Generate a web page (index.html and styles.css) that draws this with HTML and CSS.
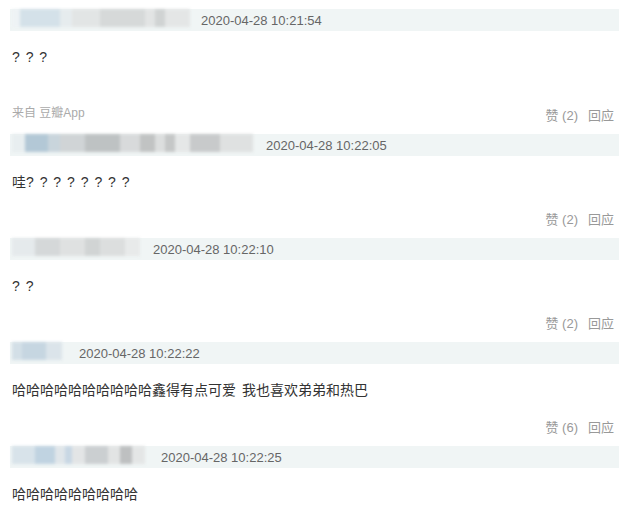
FILE: index.html
```html
<!DOCTYPE html>
<html lang="zh-CN">
<head>
    <meta charset="UTF-8">
    <meta name="viewport" content="width=device-width, initial-scale=1.0">
    <title>回应</title>
    <link rel="stylesheet" href="styles.css">
</head>
<body>
    <div class="comments">
        <div class="comment">
            <div class="comment-head">
                <span class="author author-1"></span>
                <span class="pubtime">2020-04-28 10:21:54</span>
            </div>
            <div class="comment-body">? ? ?</div>
            <div class="comment-foot from-app">
                <span class="source">来自 豆瓣App</span>
                <span class="actions"><a>赞 (2)</a><a>回应</a></span>
            </div>
        </div>

        <div class="comment">
            <div class="comment-head">
                <span class="author author-2"></span>
                <span class="pubtime">2020-04-28 10:22:05</span>
            </div>
            <div class="comment-body">哇? ? ? ? ? ? ? ?</div>
            <div class="comment-foot">
                <span class="actions"><a>赞 (2)</a><a>回应</a></span>
            </div>
        </div>

        <div class="comment">
            <div class="comment-head">
                <span class="author author-3"></span>
                <span class="pubtime">2020-04-28 10:22:10</span>
            </div>
            <div class="comment-body">? ?</div>
            <div class="comment-foot">
                <span class="actions"><a>赞 (2)</a><a>回应</a></span>
            </div>
        </div>

        <div class="comment">
            <div class="comment-head">
                <span class="author author-4"></span>
                <span class="pubtime">2020-04-28 10:22:22</span>
            </div>
            <div class="comment-body">哈哈哈哈哈哈哈哈哈哈鑫得有点可爱 我也喜欢弟弟和热巴</div>
            <div class="comment-foot">
                <span class="actions"><a>赞 (6)</a><a>回应</a></span>
            </div>
        </div>

        <div class="comment">
            <div class="comment-head">
                <span class="author author-5"></span>
                <span class="pubtime">2020-04-28 10:22:25</span>
            </div>
            <div class="comment-body">哈哈哈哈哈哈哈哈哈</div>
        </div>
    </div>
</body>
</html>
```

FILE: styles.css
```css
body {
    margin: 0;
    font-family: "Liberation Sans", Arial, "Noto Sans CJK SC", sans-serif;
    font-size: 13px;
    color: #333;
    background: #fff;
    overflow: hidden;
}

.comments {
    padding: 9px 0 0 10px;
}

.comment-head {
    display: flex;
    align-items: center;
    height: 22px;
    padding-left: 2px;
    background: #f0f5f5;
}

/* hidden user names, drawn as a soft mosaic */
.author {
    height: 18px;
    margin-top: -4px;
    filter: blur(1.4px);
}

.author-1 {
    width: 178px;
    margin-right: 11px;
    background: linear-gradient(90deg, #eef3f5 0 8px, #d4e1e9 8px 48px, #e6ecee 48px 60px,
        #e2e5e5 60px 88px, #d6d9d9 88px 133px, #e2e4e4 133px 143px, #d0d3d3 143px 153px, #e4e6e6 153px);
}

.author-2 {
    width: 241px;
    margin-right: 13px;
    background: linear-gradient(90deg, #e8eef0 0 13px, #b3c8d6 13px 36px, #c9d5dc 36px 48px,
        #d0d4d6 48px 73px, #bec2c3 73px 108px, #d8dadb 108px 128px, #c1c3c3 128px 143px,
        #dcdede 143px 153px, #c5c7c7 153px 163px, #e5e7e7 163px 178px, #c8cacb 178px 208px, #dfe1e1 208px);
}

.author-3 {
    width: 128px;
    margin-right: 13px;
    background: linear-gradient(90deg, #e5eaec 0 23px, #d5d8d9 23px 48px, #dfe1e1 48px 73px,
        #d1d4d4 73px 88px, #dcdede 88px 113px, #e8eaea 113px);
}

.author-4 {
    width: 50px;
    margin-right: 17px;
    background: linear-gradient(90deg, #d3dfe7 0 10px, #c6d6e1 10px 34px, #dbe4ea 34px);
}

.author-5 {
    width: 133px;
    margin-right: 16px;
    background: linear-gradient(90deg, #d8e3ea 0 23px, #c0d3e1 23px 43px, #e0e6ea 43px 53px,
        #c8d7e4 53px 60px, #e3e5e6 60px 73px, #cbcfd1 73px 96px, #e2e4e4 96px 108px,
        #bec0c1 108px 120px, #e4e6e6 120px);
}

.pubtime {
    color: #666;
    font-size: 13px;
}

.comment-body {
    margin-top: 17px;
    padding-left: 2px;
    font-size: 14px;
    line-height: 18px;
    word-spacing: 2px;
    color: #333;
}

.comment-foot {
    display: flex;
    justify-content: flex-end;
    align-items: flex-end;
    height: 18px;
    margin: 20px 0 9px;
    padding: 0 5px 0 2px;
    line-height: 18px;
    color: #999;
}

.comment-foot.from-app {
    justify-content: space-between;
    height: 39px;
}

.source {
    margin-bottom: 3px;
    color: #aaa;
    font-size: 12px;
}

.actions {
    display: flex;
    gap: 10px;
}

.actions a {
    color: #999;
    cursor: pointer;
}
```
